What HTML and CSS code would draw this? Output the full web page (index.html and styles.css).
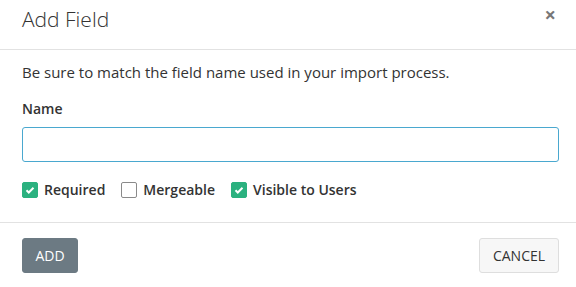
FILE: index.html
```html
<!DOCTYPE html>
<html>

<head>
    <link rel="stylesheet" href="styles.css">
</head>

<body>
    <div class="modal">
        <div class="modal-header">
            <h1 class="modal-title">Add Field</h1>
            <span class="close">&times;</span>
        </div>
        <div class="modal-body">
            <p class="hint">Be sure to match the field name used in your import process.</p>
            <label class="field-label" for="name">Name</label>
            <input class="field-input" id="name" type="text">
            <div class="checks">
                <label class="check">
                    <span class="box on"><svg viewBox="0 0 16 16"><path d="M4 8.3l2.6 2.6L12 5.4" /></svg></span>
                    Required
                </label>
                <label class="check">
                    <span class="box"></span>
                    Mergeable
                </label>
                <label class="check">
                    <span class="box on"><svg viewBox="0 0 16 16"><path d="M4 8.3l2.6 2.6L12 5.4" /></svg></span>
                    Visible to Users
                </label>
            </div>
        </div>
        <div class="modal-footer">
            <button class="btn btn-add">ADD</button>
            <button class="btn btn-cancel">CANCEL</button>
        </div>
    </div>
</body>

</html>
```

FILE: styles.css
```css
body {
    margin: 0;
    background-color: #fff;
    font-family: 'Open Sans', sans-serif;
    color: #333;
}

.modal {
    width: 576px;
    height: 287px;
}

.modal-header {
    height: 49px;
    padding: 0 22px;
    display: flex;
    align-items: center;
    justify-content: space-between;
    border-bottom: 1px solid #e2e2e2;
}

.modal-title {
    margin: 0;
    font-size: 21px;
    font-weight: 300;
    color: #333;
    line-height: 1;
    margin-top: -10px;
}

.close {
    font-size: 20px;
    font-weight: 700;
    color: #777;
    margin-top: -20px;
    margin-right: -2px;
}

.modal-body {
    padding: 12px 17px 0 22px;
    height: 160px;
    border-bottom: 1px solid #e2e2e2;
}

.hint {
    margin: 0;
    font-size: 15px;
    line-height: 20px;
}

.field-label {
    display: block;
    margin-top: 17px;
    font-size: 14px;
    font-weight: 600;
    line-height: 20px;
}

.field-input {
    display: block;
    box-sizing: border-box;
    width: 100%;
    height: 35px;
    margin-top: 8px;
    border: 1px solid #4aa8cf;
    border-radius: 3px;
    outline: none;
}

.checks {
    display: flex;
    gap: 16px;
    margin-top: 19px;
}

.check {
    display: flex;
    align-items: center;
    gap: 6px;
    font-size: 14px;
    font-weight: 600;
    line-height: 18px;
}

.box {
    width: 14px;
    height: 14px;
    border: 1px solid #8a8a8a;
    border-radius: 2px;
    display: inline-flex;
}

.box.on {
    background: #2bb17f;
    border-color: #2bb17f;
}

.box svg {
    width: 14px;
    height: 14px;
    fill: none;
    stroke: #fff;
    stroke-width: 2.2;
}

.modal-footer {
    padding: 15px 17px 0 22px;
    display: flex;
    justify-content: space-between;
}

.btn {
    height: 35px;
    border-radius: 3px;
    font-family: 'Open Sans', sans-serif;
    font-size: 14px;
    padding: 0 10px;
}

.btn-add {
    width: 56px;
    background: #6c7a83;
    border: 1px solid #6c7a83;
    color: #fff;
}

.btn-cancel {
    width: 80px;
    background: #f7f7f7;
    border: 1px solid #dedede;
    color: #333;
}
```
